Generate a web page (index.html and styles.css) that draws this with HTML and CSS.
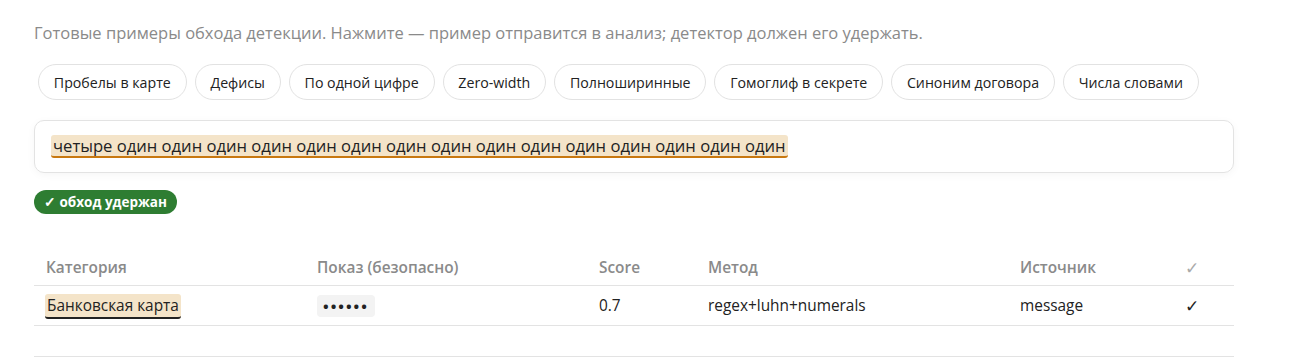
FILE: index.html
```html
<!DOCTYPE html>
<html lang="ru">
<head>
    <meta charset="UTF-8">
    <title>Обход детекции</title>
    <link rel="stylesheet" href="styles.css">
</head>
<body>
    <div class="page">

        <p class="intro">Готовые примеры обхода детекции. Нажмите — пример отправится в анализ; детектор должен его удержать.</p>

        <!-- preset examples -->
        <div class="chips">
            <button class="chip">Пробелы в карте</button>
            <button class="chip">Дефисы</button>
            <button class="chip">По одной цифре</button>
            <button class="chip">Zero-width</button>
            <button class="chip">Полноширинные</button>
            <button class="chip">Гомоглиф в секрете</button>
            <button class="chip">Синоним договора</button>
            <button class="chip">Числа словами</button>
        </div>

        <div class="sample">
            <mark class="hit">четыре один один один один один один один один один один один один один один один</mark>
        </div>

        <span class="verdict">✓ обход удержан</span>

        <table class="results">
            <thead>
                <tr>
                    <th class="col-cat">Категория</th>
                    <th class="col-show">Показ (безопасно)</th>
                    <th class="col-score">Score</th>
                    <th class="col-method">Метод</th>
                    <th class="col-src">Источник</th>
                    <th class="col-ok">✓</th>
                </tr>
            </thead>
            <tbody>
                <tr>
                    <td><span class="tag">Банковская карта</span></td>
                    <td><span class="masked">••••••</span></td>
                    <td>0.7</td>
                    <td>regex+luhn+numerals</td>
                    <td>message</td>
                    <td class="ok">✓</td>
                </tr>
            </tbody>
        </table>

        <div class="divider"></div>

    </div>
</body>
</html>
```

FILE: styles.css
```css
body {
    font-family: "Open Sans", Arial, sans-serif;
    background-color: white;
    color: #222;
    margin: 0;
    padding: 0;
}

.page {
    width: 1200px;
    padding: 22px 34px 0;
}

.intro {
    margin: 0 0 20px;
    font-size: 16.5px;
    line-height: 22px;
    color: #8a8a8a;
}

.chips {
    display: flex;
    gap: 8px;
    margin-bottom: 20px;
    padding-left: 4px;
}

.chip {
    font-family: inherit;
    font-size: 14.2px;
    color: #222;
    background-color: white;
    border: 1px solid #e2e2e2;
    border-radius: 18px;
    height: 36px;
    padding: 0 14.8px;
    cursor: pointer;
}

.sample {
    border: 1px solid #e3e3e3;
    border-radius: 10px;
    box-shadow: 0 2px 8px rgba(0, 0, 0, 0.04);
    padding: 14px 16px;
    margin-bottom: 17px;
}

.hit {
    background-color: #f4e4c9;
    color: #222;
    border-bottom: 2px solid #c87810;
    border-radius: 3px;
    font-size: 16.6px;
    line-height: 21px;
    padding: 0 2px;
    display: inline-block;
}

.verdict {
    display: inline-block;
    background-color: #2e7d32;
    color: white;
    font-size: 13.5px;
    font-weight: bold;
    line-height: 24px;
    padding: 0 10px;
    border-radius: 12px;
}

.results {
    width: 100%;
    border-collapse: collapse;
    margin-top: 37px;
    font-size: 15.4px;
}

.results th {
    text-align: left;
    color: #8a8a8a;
    font-weight: 600;
    padding: 6px 12px 7px;
    line-height: 21px;
    border-bottom: 1px solid #e3e3e3;
}

.results td {
    padding: 8px 12px;
    height: 22px;
    border-bottom: 1px solid #e3e3e3;
}

.col-cat { width: 247px; }
.col-show { width: 258px; }
.col-score { width: 85px; }
.col-method { width: 288px; }
.col-src { width: 141px; }

.results .col-ok {
    font-weight: normal;
    font-size: 17px;
    color: #aaa;
}

.ok {
    font-size: 17px;
}

.tag {
    background-color: #f4e4c9;
    border-bottom: 2px solid #222;
    border-radius: 3px;
    padding: 1px 2px;
    margin-left: -1px;
}

.masked {
    display: inline-block;
    background-color: #f3f3f3;
    border-radius: 4px;
    padding: 0 6px;
    line-height: 22px;
    font-size: 15px;
    font-weight: bold;
    letter-spacing: 2px;
}

.divider {
    border-top: 1px solid #e3e3e3;
    margin-top: 30px;
}
```
